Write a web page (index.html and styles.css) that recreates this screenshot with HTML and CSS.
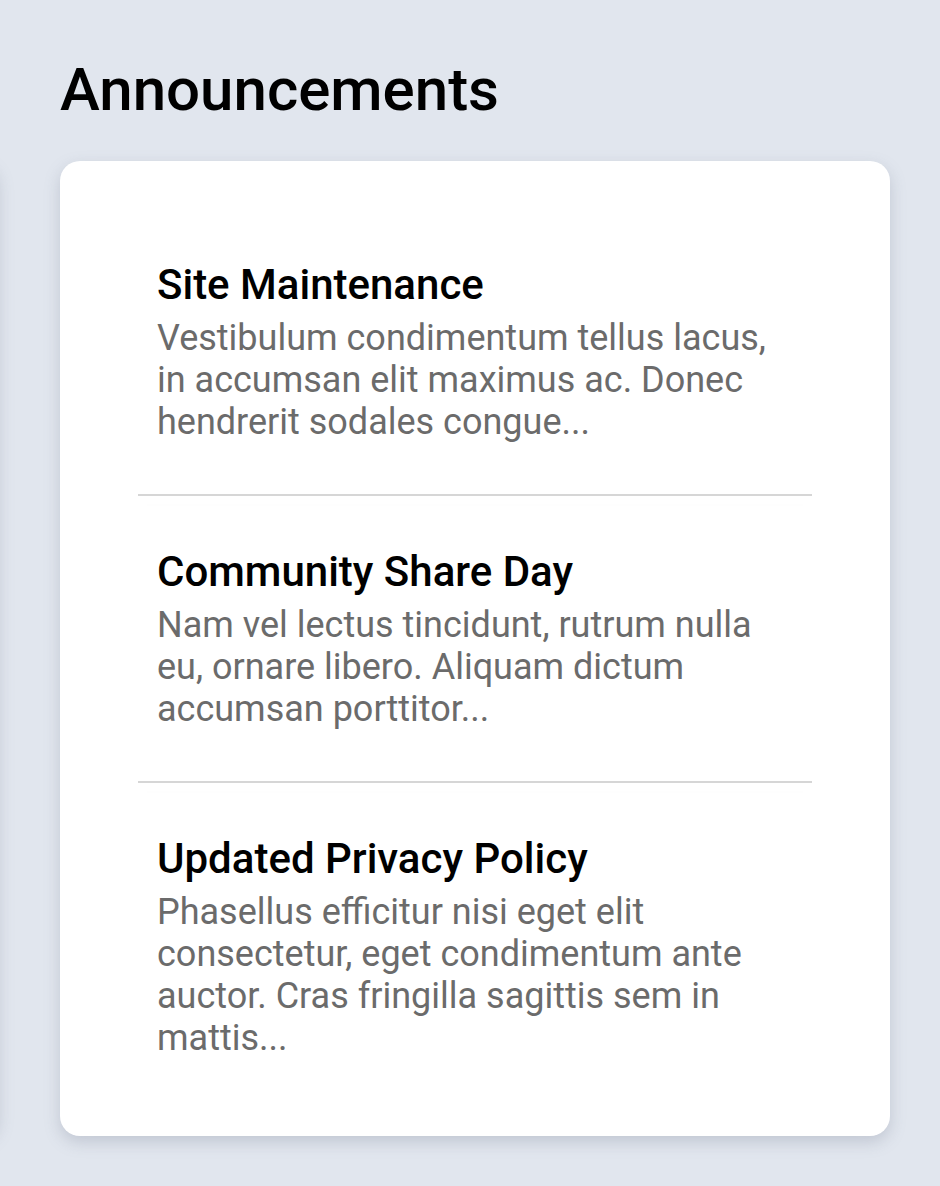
FILE: index.html
```html
<!DOCTYPE html>
<html lang="en">
<head>
<meta charset="utf-8">
<title>Announcements</title>
<link rel="stylesheet" href="styles.css">
</head>
<body>
<main class="page">
  <h1 class="page-title">Announcements</h1>
  <div class="track">
    <section class="card card-prev" aria-hidden="true"></section>
    <section class="card">
      <article class="item">
        <h2 class="item-title">Site Maintenance</h2>
        <p class="item-text">Vestibulum condimentum tellus lacus, in accumsan elit maximus ac. Donec hendrerit sodales congue...</p>
      </article>
      <div class="divider"></div>
      <article class="item">
        <h2 class="item-title">Community Share Day</h2>
        <p class="item-text">Nam vel lectus tincidunt, rutrum nulla eu, ornare libero. Aliquam dictum accumsan porttitor...</p>
      </article>
      <div class="divider"></div>
      <article class="item">
        <h2 class="item-title">Updated Privacy Policy</h2>
        <p class="item-text">Phasellus efficitur nisi eget elit consectetur, eget condimentum ante auctor. Cras fringilla sagittis sem in mattis...</p>
      </article>
    </section>
  </div>
</main>
</body>
</html>
```
FILE: styles.css
```css
html, body {
  margin: 0;
  padding: 0;
}
body {
  background: #e1e6ee;
  font-family: Roboto, "Liberation Sans", sans-serif;
  width: 940px;
  height: 1186px;
  overflow: hidden;
}
.page {
  padding: 52px 0 0 60px;
}
.page-title {
  margin: 0;
  font-size: 60px;
  line-height: 76px;
  font-weight: 500;
  color: #000;
}
.track {
  margin-top: 33px;
  margin-left: -892px;
  display: flex;
  gap: 62px;
}
.card {
  flex: 0 0 830px;
  box-sizing: border-box;
  background: #fff;
  border-radius: 20px;
  box-shadow: 0 6px 16px rgba(110, 120, 140, 0.28);
  padding: 48px 78px 26px;
}
.item {
  padding: 52px 19px 51px;
}
.item-title {
  margin: 0 0 8px;
  font-size: 42px;
  line-height: 48px;
  font-weight: 500;
  color: #000;
}
.item-text {
  margin: 0;
  font-size: 36px;
  line-height: 42px;
  color: #6b6b6b;
}
.divider {
  height: 2px;
  background: #d6d6d6;
  box-shadow: 0 10px 10px rgba(0, 0, 0, 0.025);
}
```
